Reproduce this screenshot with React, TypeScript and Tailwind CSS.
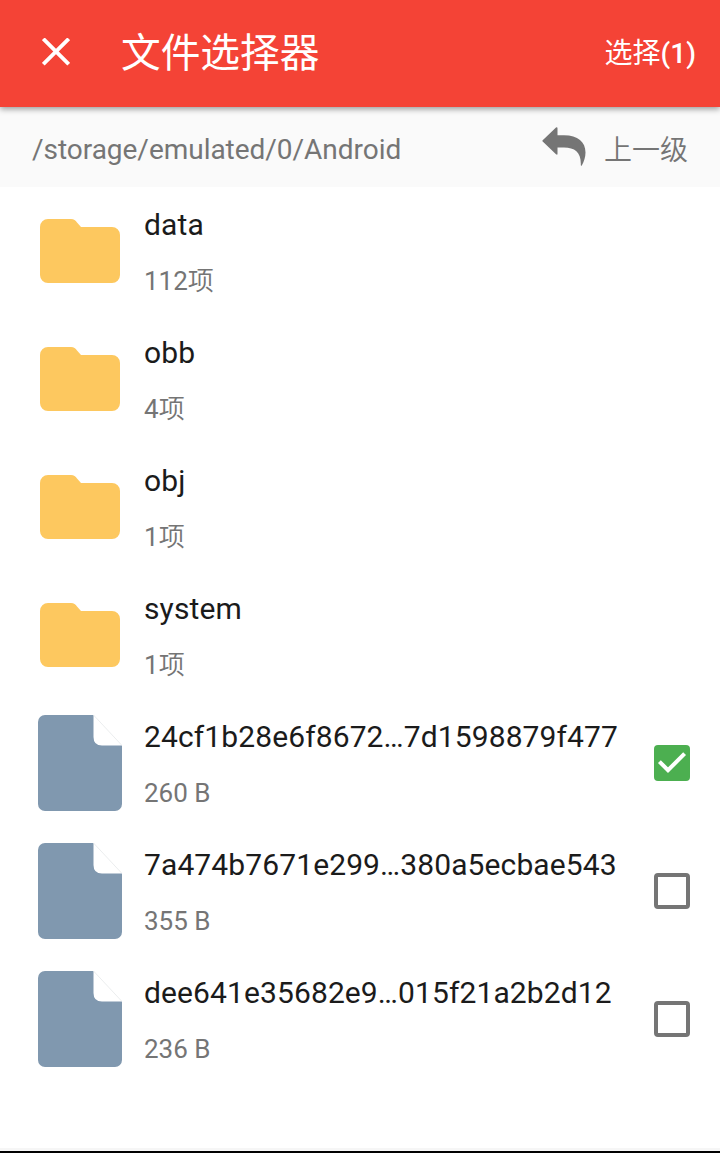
type Entry = { name: string; detail: string; unit?: string; kind: 'folder' | 'file'; checked?: boolean };

const entries: Entry[] = [
  { name: 'data', detail: '112', unit: '项', kind: 'folder' },
  { name: 'obb', detail: '4', unit: '项', kind: 'folder' },
  { name: 'obj', detail: '1', unit: '项', kind: 'folder' },
  { name: 'system', detail: '1', unit: '项', kind: 'folder' },
  { name: '24cf1b28e6f8672…7d1598879f477', detail: '260 B', kind: 'file', checked: true },
  { name: '7a474b7671e299…380a5ecbae543', detail: '355 B', kind: 'file', checked: false },
  { name: 'dee641e35682e9…015f21a2b2d12', detail: '236 B', kind: 'file', checked: false },
];

function FolderIcon() {
  return (
    <svg className="h-16 w-20" viewBox="0 0 80 64" fill="#fdc85f">
      <path d="M8 0H31C34 0 35.5 1.5 37 3.5L41 8H72A8 8 0 0 1 80 16V56A8 8 0 0 1 72 64H8A8 8 0 0 1 0 56V8A8 8 0 0 1 8 0Z" />
    </svg>
  );
}

function FileIcon() {
  return (
    <svg className="h-24 w-21" viewBox="0 0 84 96">
      <path fill="#8098af" d="M7 0H55.5V22Q55.5 30.5 64 30.5H84V89A7 7 0 0 1 77 96H7A7 7 0 0 1 0 89V7A7 7 0 0 1 7 0Z" />
      <path fill="none" stroke="#e6e8ea" strokeWidth="0.8" d="M55.5 0L84 30.5" />
    </svg>
  );
}

function Checkbox({ checked }: { checked: boolean }) {
  return checked ? (
    <span role="checkbox" aria-checked="true" className="size-9 shrink-0 rounded-[4px] bg-[#4caf50]">
      <svg className="size-9" viewBox="0 0 36 36" fill="none" stroke="#fff" strokeWidth="4">
        <path d="M5.4 16.6L14 25.2L30.6 8.6" />
      </svg>
    </span>
  ) : (
    <span role="checkbox" aria-checked="false" className="size-9 shrink-0 rounded-[4px] border-4 border-[#757575]" />
  );
}

export default function App() {
  return (
    <div className="flex h-[1153px] w-[720px] flex-col overflow-hidden bg-white font-['Roboto','Noto_Sans_CJK_SC',sans-serif]">
      <header className="relative z-10 flex h-[107px] shrink-0 items-center bg-[#f44336] pr-6 pl-[42px] text-white shadow-[0_2px_6px_rgba(0,0,0,0.4)]">
        <svg className="mb-1 size-7 shrink-0" viewBox="0 0 28 28" fill="none" stroke="currentColor" strokeWidth="3.8">
          <path d="M1.3 .8L26.7 26.2M26.7 .8L1.3 26.2" />
        </svg>
        <h1 className="ml-[51px] text-[39.7px] leading-[48px]">文件选择器</h1>
        <button className="ml-auto text-[28px] leading-9 font-medium">
          <span className="font-normal">选择</span>(1)
        </button>
      </header>
      <div className="flex h-20 shrink-0 items-center bg-[#fafafa] pr-8 pl-8 text-[#757575]">
        <span className="mt-[5px] text-[28px] leading-9 tracking-[-0.03px]">/storage/emulated/0/Android</span>
        <svg className="ml-auto h-10 w-11 shrink-0" viewBox="0 0 44 40" fill="currentColor">
          <path d="M.7 14.5Q0 14 .7 13.3L14 .5Q15.5 -.3 15.5 1.5V8.3H22C36 8.3 43.5 15 43.5 25.5C43.5 30 42 35 39.8 38.4Q38.8 39.3 38.8 37.8C39.2 25.5 33 20.6 22 20.6H15.5V26.7Q15.5 28.3 14 27.2Z" />
        </svg>
        <button className="mt-[7px] ml-[18px] text-[28px] leading-9 font-[350]">上一级</button>
      </div>
      <ul className="flex-1">
        {entries.map((entry) => (
          <li key={entry.name} className="flex h-32 items-center pr-[30px]">
            <div className="ml-[38px] flex w-21 shrink-0 justify-center">
              {entry.kind === 'folder' ? <FolderIcon /> : <FileIcon />}
            </div>
            <div className="ml-[22px] h-32 flex-1 whitespace-nowrap">
              <div className="mt-[19px] text-[30px] leading-[38px] tracking-[0.11px] text-[#1b1b1b]">{entry.name}</div>
              <div className="mt-[21px] text-[26px] leading-8 text-[#757575]">
                {entry.detail}
                {entry.unit && <span className="font-[350]">{entry.unit}</span>}
              </div>
            </div>
            {entry.checked !== undefined && <Checkbox checked={entry.checked} />}
          </li>
        ))}
      </ul>
      <div className="h-[5px] shrink-0 border-b-2 border-black bg-[#f6f6f6]" />
    </div>
  );
}
